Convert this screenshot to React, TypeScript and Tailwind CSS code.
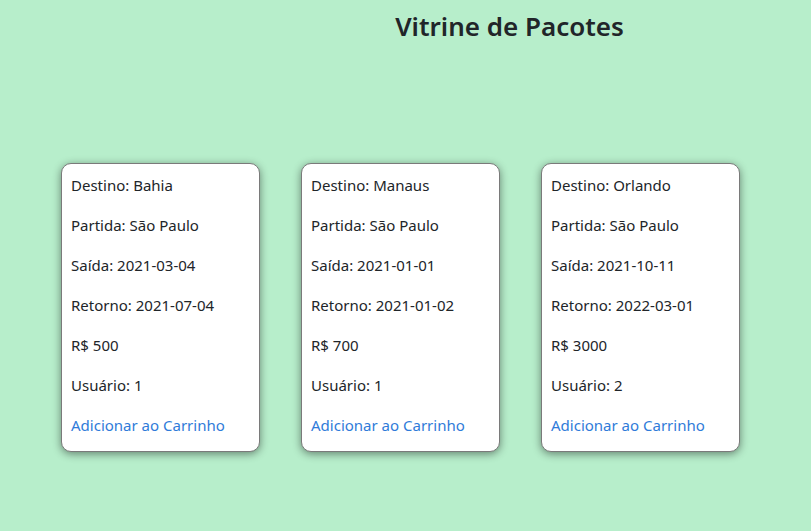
const pacotes = [
  { destino: 'Bahia', partida: 'São Paulo', saida: '2021-03-04', retorno: '2021-07-04', preco: 500, usuario: 1 },
  { destino: 'Manaus', partida: 'São Paulo', saida: '2021-01-01', retorno: '2021-01-02', preco: 700, usuario: 1 },
  { destino: 'Orlando', partida: 'São Paulo', saida: '2021-10-11', retorno: '2022-03-01', preco: 3000, usuario: 2 },
];

function Card({ p }: { p: (typeof pacotes)[number] }) {
  return (
    <div className="w-[199px] h-[289px] bg-white border border-[#7a7a7a] rounded-[10px] shadow-[0_2px_8px_rgba(0,0,0,0.45)] px-[9px] pt-[9px] pb-[13px] text-[15px] leading-[24px] text-[#212529]">
      <p className="mb-4">Destino: {p.destino}</p>
      <p className="mb-4">Partida: {p.partida}</p>
      <p className="mb-4">Saída: {p.saida}</p>
      <p className="mb-4">Retorno: {p.retorno}</p>
      <p className="mb-4">R$ {p.preco}</p>
      <p className="mb-4">Usuário: {p.usuario}</p>
      <a href="#" className="block text-[#2f7bd9]">Adicionar ao Carrinho</a>
    </div>
  );
}

export default function App() {
  return (
    <div className="min-h-[531px] bg-[#b7eecb] font-['Segoe_UI','Noto_Sans',sans-serif]">
      <div className="pl-[208px] pt-[9px] text-center">
        <h2 className="text-[26px] leading-[34px] font-semibold text-[#212529]">Vitrine de Pacotes</h2>
      </div>
      <div className="flex gap-[41px] pl-[61px] mt-[120px]">
        {pacotes.map((p) => (
          <Card key={p.destino} p={p} />
        ))}
      </div>
    </div>
  );
}
